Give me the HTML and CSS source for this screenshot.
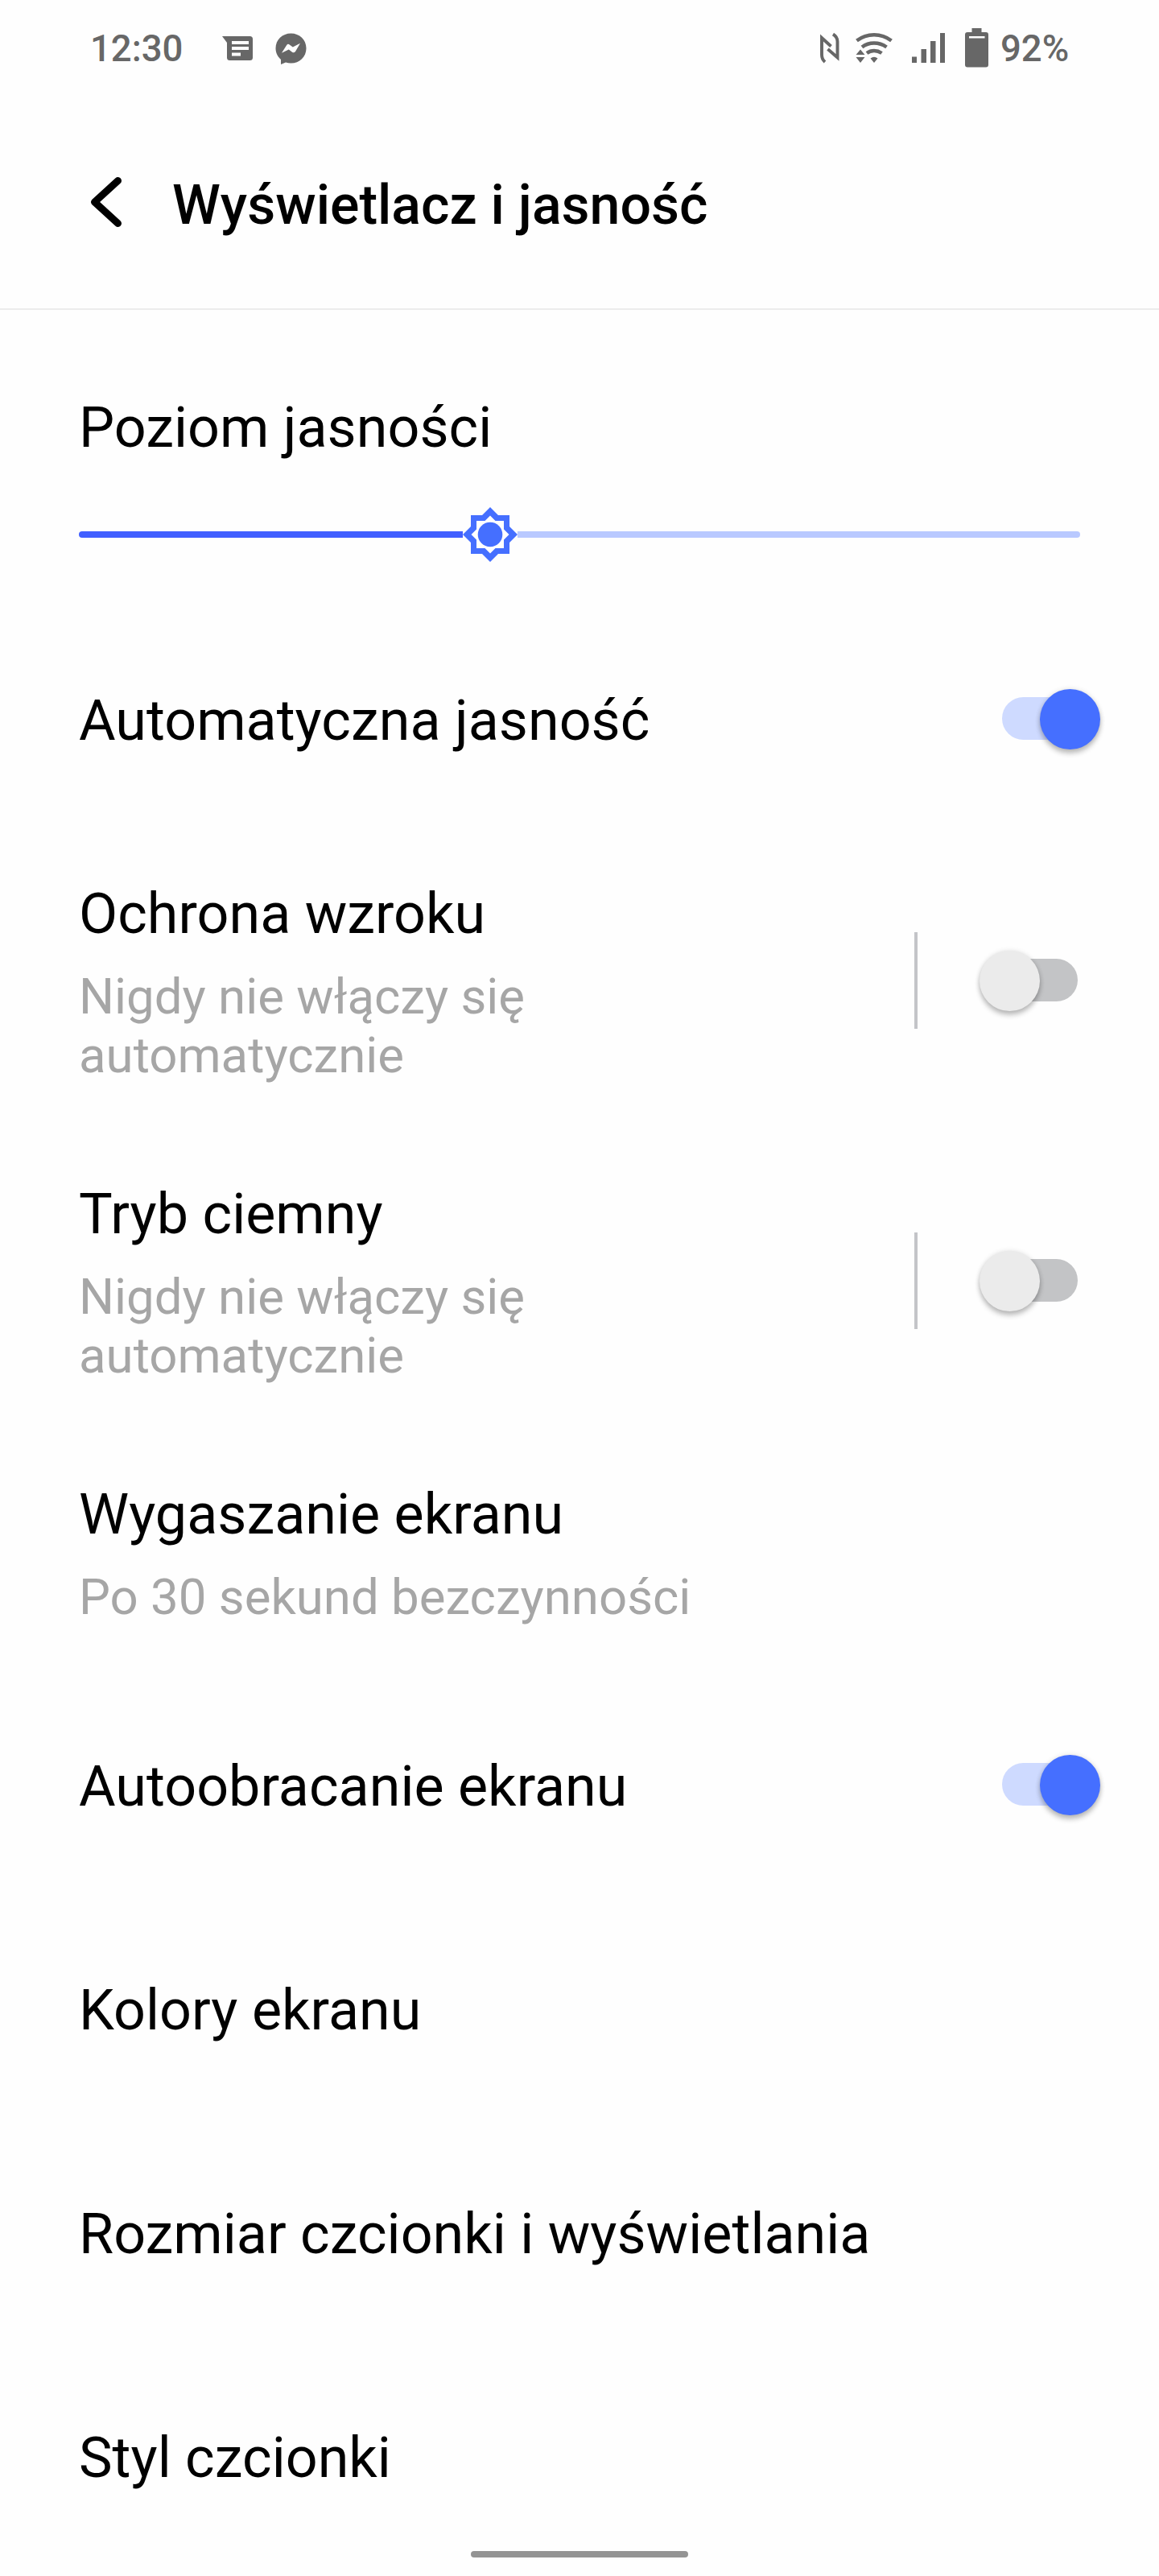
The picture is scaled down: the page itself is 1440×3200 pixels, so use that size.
FILE: index.html
```html
<!DOCTYPE html>
<html lang="pl">
<head>
    <meta charset="UTF-8">
    <meta name="viewport" content="width=device-width, initial-scale=1.0">
    <title>Wyświetlacz i jasność</title>
    <link rel="stylesheet" href="styles.css">
</head>
<body>
    <div class="status-bar">
        <span class="clock">12:30</span>
        <svg class="icon-message" width="38" height="50" viewBox="0 0 38 50">
            <path fill="currentColor" fill-rule="evenodd" d="M0 11H34.500Q38 11 38 14.500V37.500Q38 41 34.500 41H9.500Q6 41 6 37.500V19ZM12 17V21H33V17ZM12 24V28H33V24ZM12 31.500V35.500H23V31.500Z"/>
        </svg>
        <svg class="icon-messenger" width="39" height="50" viewBox="0 0 39 50">
            <path fill="currentColor" d="M19.500 7.500C8.800 7.500 0.500 15.300 0.500 26C0.500 31.600 3 36.500 7 40V46L13 43.500C15 44.200 17.200 44.600 19.500 44.600C30.200 44.600 38.500 36.700 38.500 26C38.500 15.300 30.200 7.500 19.500 7.500Z"/>
            <path fill="#fefefe" d="M8 31.800L14.200 22Q15.700 20 17.700 21.500L21.800 24.600L31 19.800L25 29.900Q23.300 32.300 21 30.700L16.800 27.500Z"/>
        </svg>
        <div class="status-right">
            <svg class="icon-nfc" width="26" height="50" viewBox="0 0 26 50">
                <path fill="none" stroke="currentColor" stroke-width="3.900" d="M8 43Q4 39.500 4 34V13L15.500 23.500M18 8.500Q23.500 12 23.500 17.500V37.500L11.500 27"/>
            </svg>
            <svg class="icon-wifi" width="46" height="50" viewBox="0 0 46 50">
                <g fill="none" stroke="currentColor" stroke-width="4.500">
                    <path d="M1.500 16.500Q11 9.200 23 9.200T44.500 16.500"/>
                    <path d="M8 24.500Q14.500 19.500 23 19.500T38.500 24.500"/>
                    <path d="M14 32Q18 29 23 29T32.500 32"/>
                </g>
                <path fill="currentColor" d="M18.500 38.500Q23 35 27.500 38.500L23 44Z M0.500 34L6 27.500L11.500 34Z M0.500 37L6 44L11.500 37Z"/>
            </svg>
            <svg class="icon-signal" width="42" height="50" viewBox="0 0 42 50">
                <path fill="currentColor" d="M0 36.500H6V44H0ZM11.500 27H18V44H11.500ZM23 17H29.500V44H23ZM35 7H41V44H35Z"/>
            </svg>
            <svg class="icon-battery" width="29" height="50" viewBox="0 0 29 50">
                <path fill="currentColor" fill-rule="evenodd" d="M8.500 1H20.500V6H26Q29 6 29 9V46.500Q29 49.500 26 49.500H3Q0 49.500 0 46.500V9Q0 6 3 6H8.500ZM5 11V13.500H24.500V11Z"/>
            </svg>
            <span class="battery-level">92%</span>
        </div>
    </div>

    <header class="header">
        <svg class="back" width="42" height="66" viewBox="0 0 42 66">
            <path fill="none" stroke="#000" stroke-width="9" stroke-linecap="round" stroke-linejoin="round" d="M35.500 6.500L6.500 33L35.500 59.500"/>
        </svg>
        <h1>Wyświetlacz i jasność</h1>
    </header>

    <main>
        <section class="brightness">
            <div class="label">Poziom jasności</div>
            <div class="slider">
                <div class="slider-fill"></div>
                <svg class="slider-thumb" width="68" height="68" viewBox="-34 -34 68 68">
                    <path fill="#456fff" d="M0 -34L10 -24H24V-10L34 0L24 10V24H10L0 34L-10 24H-24V10L-34 0L-24 -10V-24H-10Z"/>
                    <path fill="#fefefe" d="M0 -23.500L6.500 -17H17V-6.500L23.500 0L17 6.500V17H6.500L0 23.500L-6.500 17H-17V6.500L-23.500 0L-17 -6.500V-17H-6.500Z"/>
                    <circle r="15.300" fill="#456fff"/>
                </svg>
                <div class="slider-rest"></div>
            </div>
        </section>

        <div class="row">
            <div class="label">Automatyczna jasność</div>
            <div class="switch on"></div>
        </div>

        <div class="row">
            <div class="row-text">
                <div class="label">Ochrona wzroku</div>
                <div class="summary">Nigdy nie włączy się automatycznie</div>
            </div>
            <div class="divider"></div>
            <div class="switch"></div>
        </div>

        <div class="row">
            <div class="row-text">
                <div class="label">Tryb ciemny</div>
                <div class="summary">Nigdy nie włączy się automatycznie</div>
            </div>
            <div class="divider"></div>
            <div class="switch"></div>
        </div>

        <div class="row">
            <div class="row-text wide">
                <div class="label">Wygaszanie ekranu</div>
                <div class="summary">Po 30 sekund bezczynności</div>
            </div>
        </div>

        <div class="row">
            <div class="label">Autoobracanie ekranu</div>
            <div class="switch on"></div>
        </div>

        <div class="row">
            <div class="label">Kolory ekranu</div>
        </div>

        <div class="row">
            <div class="label">Rozmiar czcionki i wyświetlania</div>
        </div>

        <div class="row">
            <div class="label">Styl czcionki</div>
        </div>
    </main>

    <div class="home-bar"></div>
</body>
</html>
```
FILE: styles.css
```css
* {
    box-sizing: border-box;
}
body {
    position: relative;
    width: 1440px;
    height: 3200px;
    margin: 0;
    overflow: hidden;
    background-color: #fefefe;
    color: #000;
    font-family: Roboto, sans-serif;
}
svg {
    display: block;
    flex: none;
}

/* Status bar */
.status-bar {
    display: flex;
    align-items: center;
    height: 118px;
    padding: 0 112px;
    color: #676767;
    font-size: 45.5px;
    font-weight: 500;
    line-height: 54px;
}
.clock {
    width: 164px;
    padding-top: 4px;
}
.icon-messenger {
    margin-left: 28px;
}
.status-right {
    display: flex;
    align-items: center;
    margin-left: auto;
}
.icon-wifi {
    margin-left: 20px;
}
.icon-signal {
    margin-left: 24px;
}
.icon-battery {
    margin-left: 24px;
}
.battery-level {
    width: 85px;
    margin-left: 15px;
    padding-top: 4px;
}

/* Header */
.header {
    display: flex;
    align-items: center;
    height: 267px;
    padding-left: 111px;
    border-bottom: 2px solid #ececec;
}
h1 {
    margin: 0 0 0 61px;
    padding-top: 9px;
    font-size: 68px;
    font-weight: 500;
    line-height: 80px;
}

/* Rows */
.label {
    font-size: 70px;
    letter-spacing: 0.03px;
    line-height: 84px;
    white-space: nowrap;
}
.summary {
    margin-top: 25px;
    color: #a6a6a6;
    font-size: 61.75px;
    line-height: 73px;
}
.row {
    display: flex;
    align-items: center;
    min-height: 278px;
    padding: 59px 101px 59px 98px;
}
.row-text {
    width: 640px;
}
.row-text.wide {
    width: 900px;
}

/* Brightness slider */
.brightness {
    height: 371px;
    padding: 104px 98px 0;
}
.slider {
    display: flex;
    align-items: center;
    height: 68px;
    margin-top: 57px;
}
.slider-fill {
    width: 477px;
    height: 8px;
    border-radius: 4px 0 0 4px;
    background-color: #415fff;
}
.slider-rest {
    flex: 1;
    height: 8px;
    border-radius: 0 4px 4px 0;
    background-color: #b9c9ff;
}

/* Switches, the knob hangs over the end of the track */
.switch {
    position: relative;
    width: 94px;
    height: 53px;
    margin: 0 0 6px auto;
    border-radius: 27px;
    background-color: #c3c4c6;
}
.switch::after {
    content: "";
    position: absolute;
    top: -10px;
    left: -28px;
    width: 75px;
    height: 75px;
    border-radius: 50%;
    background-color: #ebebeb;
    box-shadow: 0 5px 6px rgba(0, 0, 0, 0.24), 0 0 6px rgba(0, 0, 0, 0.12);
}
.switch.on {
    background-color: #cedaff;
}
.switch.on::after {
    left: 47px;
    background-color: #456fff;
}
.divider {
    width: 4px;
    height: 120px;
    margin: 0 0 5px auto;
    background-color: #c3c4c8;
}
.divider + .switch {
    margin-left: 105px;
}

/* Gesture bar */
.home-bar {
    position: absolute;
    bottom: 23px;
    left: 585px;
    width: 270px;
    height: 8px;
    border-radius: 4px;
    background-color: #949494;
}
```
